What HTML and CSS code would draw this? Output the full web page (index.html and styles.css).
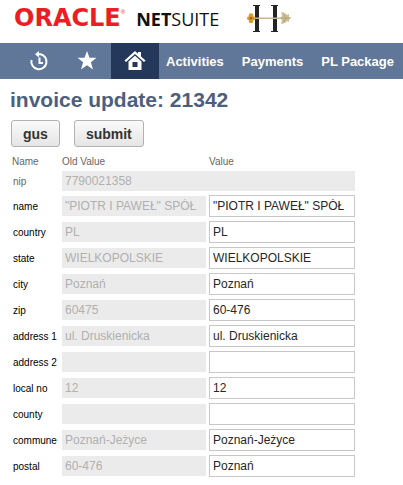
FILE: index.html
```html
<!DOCTYPE html>
<html lang="en">
<head>
    <meta charset="UTF-8">
    <title>invoice update</title>
    <link rel="stylesheet" href="styles.css">
</head>
<body>
    <header class="header">
        <div class="brand">
            <span class="oracle">ORACLE</span><span class="reg">®</span>
            <span class="netsuite"><b>NET</b>SUITE</span>
        </div>
        <svg class="company-logo" width="46" height="30" viewBox="0 0 46 30">
            <path d="M6 1h7v1h-1v25h1v1H6v-1h2V2H6zM24 1h7v1h-1v25h1v1h-7v-1h2V2h-2z" fill="#222426"/>
            <path d="M8 13.5h26V15H8z" fill="#c9b78f"/>
            <g fill="#d99a2b">
                <circle cx="4" cy="11.5" r="2.3"/><circle cx="4" cy="17" r="2.3"/>
                <circle cx="2" cy="14.2" r="2"/><circle cx="6.5" cy="14.2" r="2"/>
            </g>
            <circle cx="4" cy="14.2" r="1.2" fill="#8f641e"/>
            <path d="M34 8l4 1 2 2 2-1v3l3 1-3 1v3l-2-1-2 2-4 1 1-4-2-2 2-2z" fill="#cdbd96"/>
            <path d="M34 14.2h9M37 11l2 3-2 4" fill="none" stroke="#b5a47c"/>
        </svg>
    </header>

    <nav class="nav">
        <a class="nav-icon" href="#" aria-label="Recent">
            <svg width="20" height="20" viewBox="0 0 20 20" fill="none" stroke="#fff" stroke-width="2">
                <path d="M2.5 9a7.6 7.6 0 1 0 9-5.800H8"/>
                <path d="M10.5 6.500V12H14"/>
                <path d="M6 3.200L10 0v6.400z" fill="#fff" stroke="none"/>
            </svg>
        </a>
        <a class="nav-icon" href="#" aria-label="Shortcuts">
            <svg width="20" height="20" viewBox="0 0 20 20" fill="#fff">
                <path d="M10 0l2.500 6.800H19.500L13.900 11.200 16 18.500l-6-4.200-6 4.200 2.100-7.300L.5 6.800h7z"/>
            </svg>
        </a>
        <a class="nav-icon nav-home" href="#" aria-label="Home">
            <svg width="22" height="20" viewBox="0 0 22 20" fill="#fff">
                <path d="M11 0l3 2.700V1h3v4.400L21.500 9.500 20 11 11 3 2 11 .5 9.500z"/>
                <path fill-rule="evenodd" d="M11 4.800l6.500 5.800V19h-13v-8.400zM8.500 11v5h5v-5z"/>
            </svg>
        </a>
        <div class="nav-links">
            <a href="#">Activities</a>
            <a href="#">Payments</a>
            <a href="#">PL Package</a>
        </div>
    </nav>

    <form class="content">
        <h1>invoice update: 21342</h1>
        <div class="buttons">
            <button type="button">gus</button>
            <button type="button">submit</button>
        </div>
        <table class="fields">
            <thead>
                <tr><th class="col-name">Name</th><th class="col-old">Old Value</th><th>Value</th></tr>
            </thead>
            <tbody>
                <tr class="locked">
                    <td><label for="nip">nip</label></td>
                    <td colspan="2"><input type="text" id="nip" value="7790021358" disabled></td>
                </tr>
                <tr>
                    <td><label for="name">name</label></td>
                    <td class="old"><input type="text" aria-label="old name" value="&quot;PIOTR I PAWEŁ&quot; SPÓŁ" disabled></td>
                    <td><input type="text" id="name" value="&quot;PIOTR I PAWEŁ&quot; SPÓŁ"></td>
                </tr>
                <tr>
                    <td><label for="country">country</label></td>
                    <td class="old"><input type="text" aria-label="old country" value="PL" disabled></td>
                    <td><input type="text" id="country" value="PL"></td>
                </tr>
                <tr>
                    <td><label for="state">state</label></td>
                    <td class="old"><input type="text" aria-label="old state" value="WIELKOPOLSKIE" disabled></td>
                    <td><input type="text" id="state" value="WIELKOPOLSKIE"></td>
                </tr>
                <tr>
                    <td><label for="city">city</label></td>
                    <td class="old"><input type="text" aria-label="old city" value="Poznań" disabled></td>
                    <td><input type="text" id="city" value="Poznań"></td>
                </tr>
                <tr>
                    <td><label for="zip">zip</label></td>
                    <td class="old"><input type="text" aria-label="old zip" value="60475" disabled></td>
                    <td><input type="text" id="zip" value="60-476"></td>
                </tr>
                <tr>
                    <td><label for="address1">address 1</label></td>
                    <td class="old"><input type="text" aria-label="old address 1" value="ul. Druskienicka" disabled></td>
                    <td><input type="text" id="address1" value="ul. Druskienicka"></td>
                </tr>
                <tr>
                    <td><label for="address2">address 2</label></td>
                    <td class="old"><input type="text" aria-label="old address 2" value="" disabled></td>
                    <td><input type="text" id="address2" value=""></td>
                </tr>
                <tr>
                    <td><label for="localno">local no</label></td>
                    <td class="old"><input type="text" aria-label="old local no" value="12" disabled></td>
                    <td><input type="text" id="localno" value="12"></td>
                </tr>
                <tr>
                    <td><label for="county">county</label></td>
                    <td class="old"><input type="text" aria-label="old county" value="" disabled></td>
                    <td><input type="text" id="county" value=""></td>
                </tr>
                <tr>
                    <td><label for="commune">commune</label></td>
                    <td class="old"><input type="text" aria-label="old commune" value="Poznań-Jeżyce" disabled></td>
                    <td><input type="text" id="commune" value="Poznań-Jeżyce"></td>
                </tr>
                <tr>
                    <td><label for="postal">postal</label></td>
                    <td class="old"><input type="text" aria-label="old postal" value="60-476" disabled></td>
                    <td><input type="text" id="postal" value="Poznań"></td>
                </tr>
            </tbody>
        </table>
    </form>
</body>
</html>
```

FILE: styles.css
```css
* {
    box-sizing: border-box;
}

body {
    margin: 0;
    background: #fff;
    font-family: "Liberation Sans", Arial, sans-serif;
}

.header {
    display: flex;
    align-items: center;
    gap: 28px;
    height: 43px;
    padding: 0 14px 6px;
}

.brand {
    display: flex;
    align-items: baseline;
    line-height: 24px;
}

.oracle {
    font-family: "DejaVu Sans", sans-serif;
    font-weight: bold;
    font-size: 24px;
    color: #ee1c25;
}

.reg {
    align-self: flex-start;
    font-size: 6px;
    line-height: 12px;
    color: #ee1c25;
}

.netsuite {
    margin-left: 11px;
    font-family: "Open Sans", sans-serif;
    font-size: 18px;
    color: #111;
}

.nav {
    display: flex;
    height: 36px;
    padding-left: 15px;
    background: #607799;
}

.nav a {
    color: #fff;
    text-decoration: none;
}

.nav-icon {
    display: flex;
    flex: 0 0 48px;
    align-items: center;
    justify-content: center;
}

.nav-home {
    background: #24385b;
}

.nav-links {
    display: flex;
    align-items: center;
    gap: 18px;
    padding-left: 7px;
    font-size: 13px;
    font-weight: bold;
    white-space: nowrap;
}

.content {
    padding: 8px 48px 8px 10px;
}

h1 {
    margin: 0;
    font-size: 21px;
    line-height: 26px;
    color: #4d5f7e;
}

.buttons {
    display: flex;
    gap: 14px;
    margin: 7px 0 8px 1px;
}

button {
    height: 27px;
    padding: 0 11px;
    border: 1px solid #b2b2b2;
    border-radius: 3px;
    background: linear-gradient(#fafafa, #e5e5e5);
    font-family: inherit;
    font-size: 14px;
    font-weight: bold;
    color: #333;
}

.fields {
    width: 100%;
    border-collapse: collapse;
    table-layout: fixed;
}

.fields th {
    height: 14px;
    padding: 0 0 0 2px;
    font-size: 10px;
    font-weight: normal;
    line-height: 14px;
    text-align: left;
    color: #666;
}

.fields .col-name {
    width: 50px;
}

.fields .col-old {
    width: 147px;
}

.fields td {
    height: 26px;
    padding: 0 0 0 2px;
}

.fields td:first-child {
    padding-left: 3px;
    font-size: 10px;
    white-space: nowrap;
}

.fields .old {
    padding-right: 1px;
}

.fields .locked td {
    height: 24px;
    color: #666;
}

.fields input {
    display: block;
    width: 100%;
    height: 22px;
    padding: 0 3px;
    border: 1px solid #c8c8c8;
    background: #fff;
    font-family: inherit;
    font-size: 12px;
    color: #262626;
}

.fields input:disabled {
    height: 20px;
    border: 0;
    background: #ebebeb;
    color: #b0b0b0;
}
```
